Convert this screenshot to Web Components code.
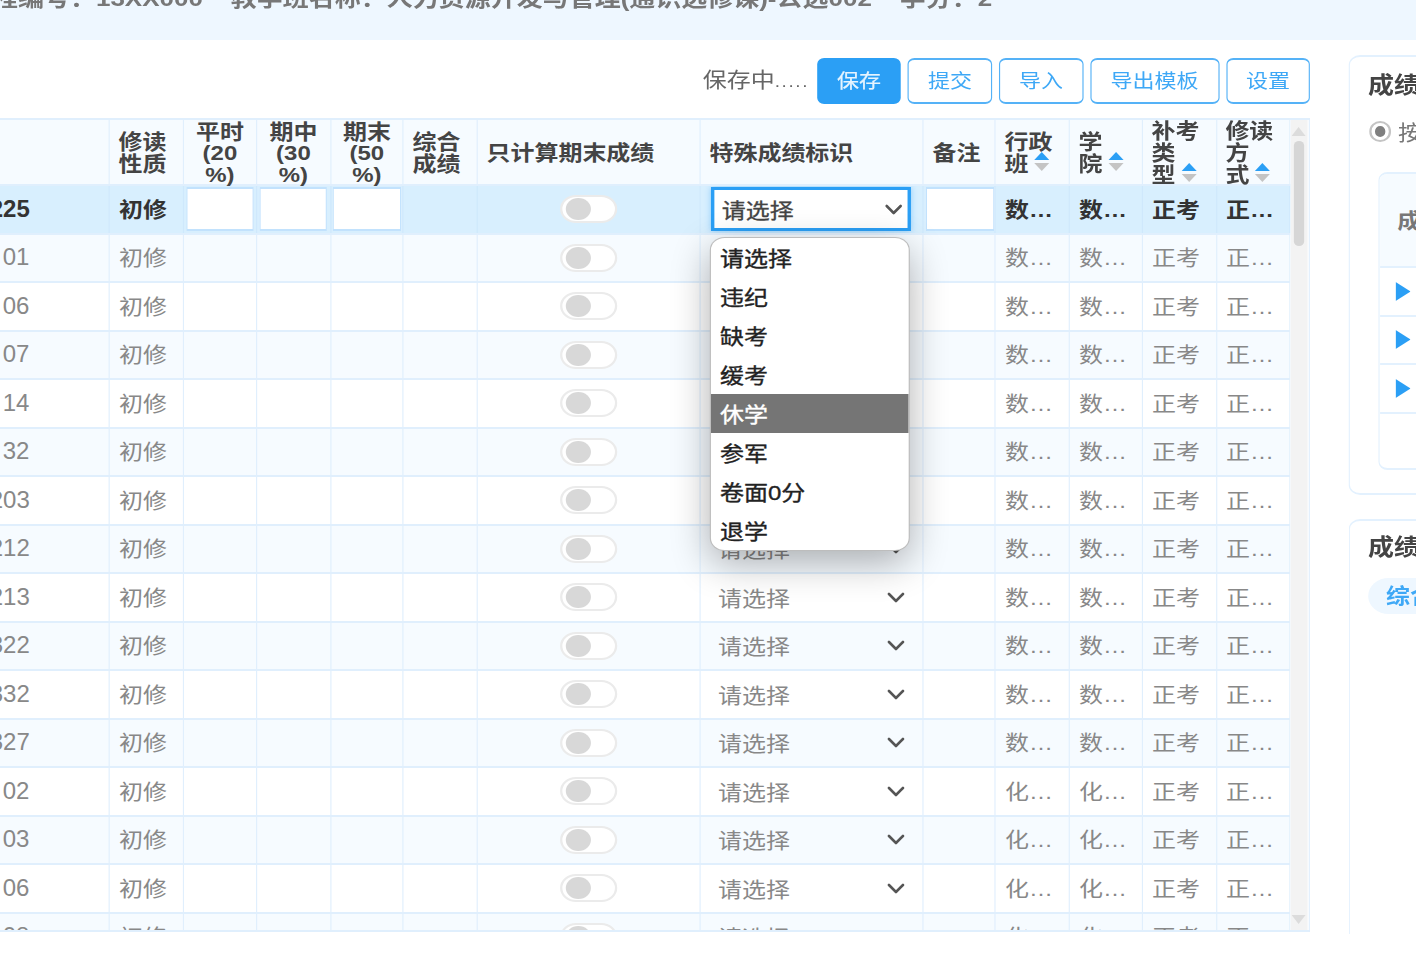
<!DOCTYPE html>
<html lang="zh">
<head>
<meta charset="utf-8">
<title>成绩录入</title>
<style>
  html, body {
    margin: 0;
    padding: 0;
    background: #ffffff;
    overflow: hidden;
  }
</style>
</head>
<body>
<gr-shell>
  <gr-info-bar></gr-info-bar>
  <gr-toolbar slot="toolbar" status="保存中" dots=".....">
    <gr-button primary>保存</gr-button>
    <gr-button>提交</gr-button>
    <gr-button>导入</gr-button>
    <gr-button wide>导出模板</gr-button>
    <gr-button>设置</gr-button>
  </gr-toolbar>
  <gr-grade-table slot="table"></gr-grade-table>
  <gr-rule-panel slot="side"></gr-rule-panel>
  <gr-chart-panel slot="side"></gr-chart-panel>
</gr-shell>

<script>
// The whole screen is stretched sideways, so horizontal sizes go through h()
const STRETCH = 1.143;
const h = ( px ) => `${( px / STRETCH ).toFixed( 3 )}px`;

const COLUMNS = [224, 74, 73, 74, 73, 74, 223, 223, 72, 74, 73, 74, 74].map( h ).join( ' ' );
const LINE = '#e0effd';

const CHEVRON = /* svg */ `
  <svg width="${h( 18 )}" height="11" viewBox="0 0 18 11" preserveAspectRatio="none" fill="none" stroke="currentColor" stroke-width="2.6" stroke-linecap="round" stroke-linejoin="round">
    <path d="M2 2 L9 9 L16 2"></path>
  </svg>
`;

const SORT = /* svg */ `<svg width="${h( 17 )}" height="19" viewBox="0 0 17 19" preserveAspectRatio="none" style="vertical-align: 0; margin-left: ${h( 5 )};"><path d="M8.5 0 L16 8 L1 8 Z" fill="#2b9ff5"></path><path d="M1 11 L16 11 L8.5 19 Z" fill="#c4c4c4"></path></svg>`;

class GRShell extends HTMLElement {
  constructor() {
    super();
    this.attachShadow( {mode: 'open'} );
    this.shadowRoot.innerHTML = /* template */ `
      <style>
        :host {
          color: #888888;
          display: flex;
          filter: blur( 0.35px );
          flex-direction: column;
          font-family: 'Liberation Sans', 'Noto Sans CJK SC', sans-serif;
          font-size: ${h( 24 )};
          height: 974px;
          overflow: hidden;
          transform: scaleX( ${STRETCH} );
          transform-origin: 0 0;
          width: ${h( 1416 )};
        }

        main {
          display: flex;
          flex-direction: row;
          gap: ${h( 39 )};
          margin-left: ${h( -114 )};
          padding: 15px 0 0 0;
        }

        .left {
          flex: none;
          width: ${h( 1424 )};
        }

        .right {
          display: flex;
          flex: none;
          flex-direction: column;
          gap: 24px;
          width: ${h( 320 )};
        }
      </style>
      <slot></slot>
      <main>
        <div class="left">
          <slot name="toolbar"></slot>
          <slot name="table"></slot>
        </div>
        <div class="right">
          <slot name="side"></slot>
        </div>
      </main>
    `;
  }
}

class GRInfoBar extends HTMLElement {
  constructor() {
    super();
    this.attachShadow( {mode: 'open'} );
    this.shadowRoot.innerHTML = /* template */ `
      <style>
        :host {
          background: #eef7ff;
          box-sizing: border-box;
          color: #777777;
          display: flex;
          flex: none;
          flex-direction: row;
          font-size: ${h( 26 )};
          font-weight: 700;
          gap: ${h( 28 )};
          height: 60px;
          line-height: 36px;
          margin: -20px 0 0 ${h( -34 )};
          white-space: nowrap;
        }
      </style>
      <span>课程编号：13XX000</span>
      <span>教学班名称：人力资源开发与管理(通识选修课)-公选002</span>
      <span>学分：2</span>
    `;
  }
}

class GRToolbar extends HTMLElement {
  constructor() {
    super();
    this.attachShadow( {mode: 'open'} );
    this.shadowRoot.innerHTML = /* template */ `
      <style>
        :host {
          align-items: flex-start;
          box-sizing: border-box;
          display: flex;
          flex-direction: row;
          gap: ${h( 7 )};
          height: 63px;
          justify-content: flex-end;
          padding: 3px 0 0 0;
        }

        span {
          color: #666666;
          line-height: 43px;
          margin-right: ${h( 1 )};
          white-space: nowrap;
        }

        small {
          font-size: ${h( 19 )};
          letter-spacing: ${h( 1.6 )};
        }
      </style>
      <span></span>
      <slot></slot>
    `;
    const $status = this.shadowRoot.querySelector( 'span' );
    $status.innerHTML = `${this.getAttribute( 'status' )}<small>${this.getAttribute( 'dots' )}</small>`;
  }
}

class GRButton extends HTMLElement {
  constructor() {
    super();
    this.attachShadow( {mode: 'open'} );
    this.shadowRoot.innerHTML = /* template */ `
      <style>
        :host {
          align-items: center;
          background: #ffffff;
          border: 2px solid #55b2f7;
          border-left-width: ${h( 2 )};
          border-radius: 6px;
          border-right-width: ${h( 2 )};
          box-sizing: border-box;
          color: #3ea8f6;
          display: inline-flex;
          font-size: ${h( 22 )};
          height: 46px;
          justify-content: center;
          padding-bottom: 2px;
          width: ${h( 84 )};
        }

        :host( [primary] ) {
          background: #2b9ff5;
          border-color: #2b9ff5;
          color: #e6f4ff;
          -webkit-text-stroke: 0.2px #e6f4ff;
        }

        :host( [wide] ) {
          width: ${h( 129 )};
        }
      </style>
      <slot></slot>
    `;
  }
}

class GRSwitch extends HTMLElement {
  constructor() {
    super();
    this.attachShadow( {mode: 'open'} );
    this.shadowRoot.innerHTML = /* template */ `
      <style>
        :host {
          align-items: center;
          background: #ffffff;
          border: 2px solid #ebebeb;
          border-radius: 15px;
          box-sizing: border-box;
          display: inline-flex;
          height: 28px;
          padding: 0 0 0 ${h( 3 )};
          width: ${h( 57 )};
        }

        i {
          background: #d8d8d8;
          border-radius: 50%;
          display: block;
          height: 22px;
          width: ${h( 25 )};
        }
      </style>
      <i></i>
    `;
  }
}

class GRSelect extends HTMLElement {
  constructor() {
    super();
    this.attachShadow( {mode: 'open'} );
    this.shadowRoot.innerHTML = /* template */ `
      <style>
        :host {
          align-items: center;
          box-sizing: border-box;
          color: #888888;
          display: flex;
          flex-direction: row;
          height: 44px;
          justify-content: space-between;
          margin-left: ${h( 9 )};
          padding: 0 ${h( 6 )} 0 ${h( 8 )};
          width: ${h( 201 )};
        }

        :host( [focused] ) {
          background: #ffffff;
          border: 3px solid #2b9ff5;
          box-shadow: 0 0 6px #8fcdfb;
          color: #444444;
          font-weight: 400;
          margin-left: ${h( 9.5 )};
          padding: 0 ${h( 5 )} 0 ${h( 8 )};
          -webkit-text-stroke: 0.3px #444444;
        }

        svg {
          color: #555555;
          flex: none;
        }

        span {
          padding-bottom: 1px;
        }
      </style>
      <span>请选择</span>
      ${CHEVRON}
    `;
  }
}

class GRGradeRow extends HTMLElement {
  constructor() {
    super();
    this.attachShadow( {mode: 'open'} );
  }

  connectedCallback() {
    const editing = this.hasAttribute( 'editing' );
    const box = editing ? '<input>' : '';
    const dept = this.getAttribute( 'dept' );

    this.shadowRoot.innerHTML = /* template */ `
      <style>
        :host {
          background: #ffffff;
          border-bottom: 2px solid ${LINE};
          box-sizing: border-box;
          display: grid;
          flex: none;
          grid-template-columns: ${COLUMNS};
          height: 48.5px;
        }

        :host( [tint] ) {
          background: #f6fbff;
        }

        :host( [editing] ) {
          background: #d8effe;
          color: #333333;
          font-weight: 700;
        }

        div {
          align-items: center;
          border-right: ${h( 2 )} solid ${LINE};
          box-sizing: border-box;
          display: flex;
          min-width: 0;
          overflow: hidden;
          padding: 0 ${h( 9 )};
        }

        :host( [editing] ) div {
          border-right-color: #cfe8fc;
        }

        div.box,
        div.wide {
          padding: 0;
        }

        div.center {
          justify-content: center;
        }

        div.number {
          justify-content: flex-end;
          padding: 0 ${h( 79 )} 0 0;
        }

        span {
          overflow: hidden;
          padding-bottom: 3px;
          text-overflow: ellipsis;
          white-space: nowrap;
        }

        /* Digits in the first column are not stretched like the rest */
        div.number span {
          flex: none;
          font-size: 24px;
          overflow: visible;
          padding-bottom: 1px;
          transform: scaleX( ${1 / STRETCH} );
          transform-origin: 100% 50%;
        }

        input {
          background: #ffffff;
          border: 2px solid #c2e2fd;
          border-left-width: ${h( 2 )};
          border-right-width: ${h( 2 )};
          box-sizing: border-box;
          height: 44px;
          margin: 0 0 0 ${h( 2 )};
          outline: none;
          padding: 0;
          width: ${h( 68 )};
        }
      </style>
      <div class="number"><span>${this.getAttribute( 'number' )}</span></div>
      <div><span>初修</span></div>
      <div class="box">${box}</div>
      <div class="box">${box}</div>
      <div class="box">${box}</div>
      <div></div>
      <div class="center"><gr-switch></gr-switch></div>
      <div class="wide"><gr-select ${editing ? 'focused' : ''}></gr-select></div>
      <div class="box">${box}</div>
      <div><span>${dept}</span></div>
      <div><span>${dept}</span></div>
      <div><span>正考</span></div>
      <div><span>正常修读</span></div>
    `;
  }
}

class GRDropdown extends HTMLElement {
  constructor() {
    super();
    this.attachShadow( {mode: 'open'} );
    const items = ['请选择', '违纪', '缺考', '缓考', '休学', '参军', '卷面0分', '退学'];

    this.shadowRoot.innerHTML = /* template */ `
      <style>
        :host {
          background: #ffffff;
          border-radius: 12px;
          box-shadow: 0 0 0 1px #bdbdbd, 0 12px 36px rgba( 0, 0, 0, 0.32 );
          color: #222222;
          display: block;
          left: ${h( 825 )};
          overflow: hidden;
          position: absolute;
          top: 118px;
          width: ${h( 198 )};
          -webkit-text-stroke: 0.35px currentColor;
        }

        div {
          box-sizing: border-box;
          height: 39px;
          line-height: 41px;
          padding: 0 0 0 ${h( 9 )};
        }

        .active {
          background: #757575;
          color: #ffffff;
        }
      </style>
      ${items.map( ( item ) => `<div class="${item === '休学' ? 'active' : ''}">${item}</div>` ).join( '' )}
    `;
  }
}

class GRScrollbar extends HTMLElement {
  constructor() {
    super();
    this.attachShadow( {mode: 'open'} );
    this.shadowRoot.innerHTML = /* template */ `
      <style>
        :host {
          align-items: center;
          background: #f3f3f3;
          box-sizing: border-box;
          display: flex;
          flex: none;
          flex-direction: column;
          padding: 7px 0 6px 0;
          width: ${h( 18 )};
        }

        i {
          background: #d6d6d6;
          border-radius: 5px;
          display: block;
          height: 105px;
          margin-top: 5px;
          width: ${h( 11 )};
        }

        svg + i + svg {
          margin-top: auto;
        }
      </style>
      <svg width="${h( 14 )}" height="9" viewBox="0 0 14 9" preserveAspectRatio="none"><path d="M7 0 L14 9 L0 9 Z" fill="#dcdcdc"></path></svg>
      <i></i>
      <svg width="${h( 14 )}" height="9" viewBox="0 0 14 9" preserveAspectRatio="none"><path d="M0 0 L14 0 L7 9 Z" fill="#dcdcdc"></path></svg>
    `;
  }
}

class GRGradeTable extends HTMLElement {
  constructor() {
    super();
    this.attachShadow( {mode: 'open'} );

    const heads = [
      ['', ''],
      ['修读<br>性质', ''],
      ['平时<br>(20<br>%)', 'center'],
      ['期中<br>(30<br>%)', 'center'],
      ['期末<br>(50<br>%)', 'center'],
      ['综合<br>成绩', ''],
      ['只计算期末成绩', ''],
      ['特殊成绩标识', ''],
      ['备注', ''],
      [`行政<br>班${SORT}`, ''],
      [`学<br>院${SORT}`, ''],
      [`补考<br>类<br>型${SORT}`, ''],
      [`修读<br>方<br>式${SORT}`, '']
    ];

    // Only the tail of each number is on screen, the column is scrolled off to the left
    const numbers = [
      '225', '01', '06', '07',
      '14', '32', '203', '212',
      '213', '322', '332', '327',
      '02', '03', '06', '08'
    ];

    const rows = numbers.map( ( number, index ) => {
      const dept = index < 12 ? '数学系' : '化学系';
      const state = index === 0 ? 'editing' : ( index % 2 === 1 ? 'tint' : '' );
      return `<gr-grade-row ${state} number="${number}" dept="${dept}"></gr-grade-row>`;
    } ).join( '' );

    this.shadowRoot.innerHTML = /* template */ `
      <style>
        :host {
          border-bottom: 2px solid ${LINE};
          border-right: ${h( 2 )} solid ${LINE};
          border-top: 2px solid ${LINE};
          box-sizing: border-box;
          display: flex;
          flex-direction: row;
          height: 814px;
          overflow: hidden;
          position: relative;
        }

        .body {
          display: flex;
          flex: none;
          flex-direction: column;
          overflow: hidden;
          width: ${h( 1404 )};
        }

        header {
          background: #f6fbff;
          border-bottom: 2px solid ${LINE};
          box-sizing: border-box;
          color: #444444;
          display: grid;
          flex: none;
          font-weight: 700;
          grid-template-columns: ${COLUMNS};
          height: 66px;
          line-height: 21.5px;
        }

        header div {
          align-items: center;
          border-right: ${h( 2 )} solid ${LINE};
          box-sizing: border-box;
          display: flex;
          padding: 0 0 8px ${h( 8.5 )};
        }

        header div.center {
          justify-content: center;
          padding-left: 0;
          text-align: center;
        }
      </style>
      <div class="body">
        <header>
          ${heads.map( ( head ) => `<div class="${head[1]}"><span>${head[0]}</span></div>` ).join( '' )}
        </header>
        ${rows}
      </div>
      <gr-scrollbar></gr-scrollbar>
      <gr-dropdown></gr-dropdown>
    `;
  }
}

class GRRulePanel extends HTMLElement {
  constructor() {
    super();
    this.attachShadow( {mode: 'open'} );
    const arrow = `<svg width="${h( 15 )}" height="19" viewBox="0 0 15 19" preserveAspectRatio="none"><path d="M0 0 L15 9.5 L0 19 Z" fill="#2b9ff5"></path></svg>`;

    this.shadowRoot.innerHTML = /* template */ `
      <style>
        :host {
          border: 2px solid #e3f1fe;
          border-left-width: ${h( 2 )};
          border-radius: 10px;
          box-sizing: border-box;
          display: block;
          flex: none;
          height: 440px;
          padding: 0 0 0 ${h( 18 )};
          white-space: nowrap;
        }

        h2 {
          color: #444444;
          font-size: ${h( 26 )};
          font-weight: 700;
          line-height: 56px;
          margin: 0;
        }

        label {
          align-items: center;
          color: #777777;
          display: flex;
          flex-direction: row;
          gap: ${h( 7 )};
          height: 34px;
          margin-top: 1px;
        }

        label i {
          background: #7f7f7f;
          border: 3px solid #ffffff;
          border-radius: 50%;
          box-shadow: 0 0 0 2px #c4c4c4;
          box-sizing: border-box;
          display: block;
          height: 17px;
          margin: 0 ${h( 2 )} 0 ${h( 3 )};
          width: ${h( 18 )};
        }

        .inner {
          border: 2px solid #e3f1fe;
          border-left-width: ${h( 2 )};
          border-radius: 8px;
          box-sizing: border-box;
          display: flex;
          flex-direction: column;
          height: 298px;
          margin: 24px 0 0 ${h( 10 )};
          overflow: hidden;
        }

        .inner div {
          align-items: center;
          border-bottom: 2px solid #e3f1fe;
          box-sizing: border-box;
          display: flex;
          flex: none;
          height: 48.5px;
          padding: 0 0 0 ${h( 16 )};
        }

        .inner div.head {
          background: #f6fbff;
          color: #777777;
          font-weight: 700;
          height: 94px;
          padding: 0 0 3px ${h( 18 )};
        }

        .inner div:last-child {
          border-bottom: none;
        }
      </style>
      <h2>成绩录入规则</h2>
      <label><i></i>按比例录入</label>
      <section class="inner">
        <div class="head">成绩类型</div>
        <div>${arrow}</div>
        <div>${arrow}</div>
        <div>${arrow}</div>
        <div></div>
      </section>
    `;
  }
}

class GRChartPanel extends HTMLElement {
  constructor() {
    super();
    this.attachShadow( {mode: 'open'} );
    this.shadowRoot.innerHTML = /* template */ `
      <style>
        :host {
          border: 2px solid #e3f1fe;
          border-bottom: none;
          border-left-width: ${h( 2 )};
          border-radius: 10px 10px 0 0;
          box-sizing: border-box;
          display: block;
          flex: none;
          height: 415px;
          padding: 0 0 0 ${h( 18 )};
          white-space: nowrap;
        }

        h2 {
          color: #444444;
          font-size: ${h( 26 )};
          font-weight: 700;
          line-height: 52px;
          margin: 0;
        }

        span {
          background: #eef7ff;
          border-radius: 18px;
          color: #3ea8f6;
          display: inline-block;
          font-weight: 700;
          height: 36px;
          line-height: 35px;
          margin-top: 5px;
          padding: 0 ${h( 18 )};
        }
      </style>
      <h2>成绩分布</h2>
      <span>综合成绩</span>
    `;
  }
}

window.customElements.define( 'gr-shell', GRShell );
window.customElements.define( 'gr-info-bar', GRInfoBar );
window.customElements.define( 'gr-toolbar', GRToolbar );
window.customElements.define( 'gr-button', GRButton );
window.customElements.define( 'gr-switch', GRSwitch );
window.customElements.define( 'gr-select', GRSelect );
window.customElements.define( 'gr-grade-row', GRGradeRow );
window.customElements.define( 'gr-dropdown', GRDropdown );
window.customElements.define( 'gr-scrollbar', GRScrollbar );
window.customElements.define( 'gr-grade-table', GRGradeTable );
window.customElements.define( 'gr-rule-panel', GRRulePanel );
window.customElements.define( 'gr-chart-panel', GRChartPanel );
</script>
</body>
</html>
